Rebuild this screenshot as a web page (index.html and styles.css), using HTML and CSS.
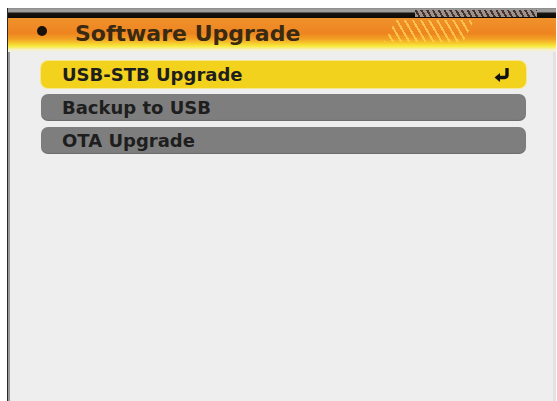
FILE: index.html
```html
<!DOCTYPE html>
<html>
<head>
<meta charset="utf-8">
<link rel="stylesheet" href="styles.css">
</head>
<body>
<div class="screen">
  <div class="topbar"><div class="hatch"></div></div>
  <div class="titlebar">
    <span class="dot"></span>
    <span class="title">Software Upgrade</span>
    <div class="stripes"></div>
  </div>
  <div class="menu">
    <div class="item active"><span>USB-STB Upgrade</span>
      <svg class="enter" viewBox="0 0 18 14" width="18" height="14"><path d="M14 1 V7 Q14 9.5 11.5 9.5 H6" fill="none" stroke="#111" stroke-width="3.4" stroke-linecap="round"/><path d="M1.5 9.5 L7 5 L7 14 Z" fill="#111"/></svg>
    </div>
    <div class="item"><span>Backup to USB</span></div>
    <div class="item"><span>OTA Upgrade</span></div>
  </div>
</div>
</body>
</html>
```
FILE: styles.css
```css
html, body { margin: 0; padding: 0; background: #ffffff; }
body { width: 557px; height: 401px; overflow: hidden; font-family: "DejaVu Sans", "Liberation Sans", sans-serif; }
.screen {
  margin: 8px 0 0 7px;
  height: 393px;
  width: 548px;
  border-left: 1px solid #2a2a2a;
  box-shadow: inset 2px 0 0 #9a9a9a, inset -3px 0 0 #e2e2e2;
  background: #eeeeee;
  display: flex;
  flex-direction: column;
}
.topbar {
  height: 10px;
  position: relative;
  background: linear-gradient(#8a8a8a 0, #a0a0a0 2px, #9a9a9a 4px, #1a1410 5px, #0c0a08 10px);
}
.hatch {
  position: absolute;
  left: 407px; top: 2px;
  width: 122px; height: 7px;
  background: repeating-linear-gradient(60deg, #9a9490 0 3px, #4a3028 3px 5px);
}
.titlebar {
  position: relative;
  height: 34px;
  display: flex;
  align-items: center;
  background: linear-gradient(#f0922c 0%, #ee8420 45%, #f2a024 62%, #f6d230 76%, #f8ec44 84%, #f6f0c8 93%, #efefe6 100%);
}
.dot {
  width: 10px; height: 10px; border-radius: 50%;
  background: #1a120a;
  margin-left: 29px;
  margin-top: -9px;
}
.title {
  margin-left: 28px;
  margin-top: -4px;
  font-size: 22px;
  font-weight: bold;
  color: #3a2a12;
}
.stripes {
  position: absolute;
  left: 376px; top: 2px;
  width: 90px; height: 22px;
  background: repeating-linear-gradient(60deg, rgba(255,210,80,0.8) 0 2px, transparent 2px 7px);
  clip-path: polygon(12px 0, 100% 0, 88% 100%, 0 100%);
}
.menu {
  display: flex;
  flex-direction: column;
  gap: 6px;
  padding: 9px 0 0 33px;
  width: 485px;
}
.item {
  height: 27px;
  border-radius: 7px;
  background: #7e7e7e;
  display: flex;
  align-items: center;
  justify-content: space-between;
  padding: 0 15px 0 21px;
  font-size: 18px;
  font-weight: bold;
  color: #1e1e1e;
  box-shadow: inset 0 -1px 1px rgba(0,0,0,0.15);
}
.item.active {
  background: #f2d21c;
  box-shadow: 0 0 0 1px #f6e890;
}
.enter { display: block; }
```
